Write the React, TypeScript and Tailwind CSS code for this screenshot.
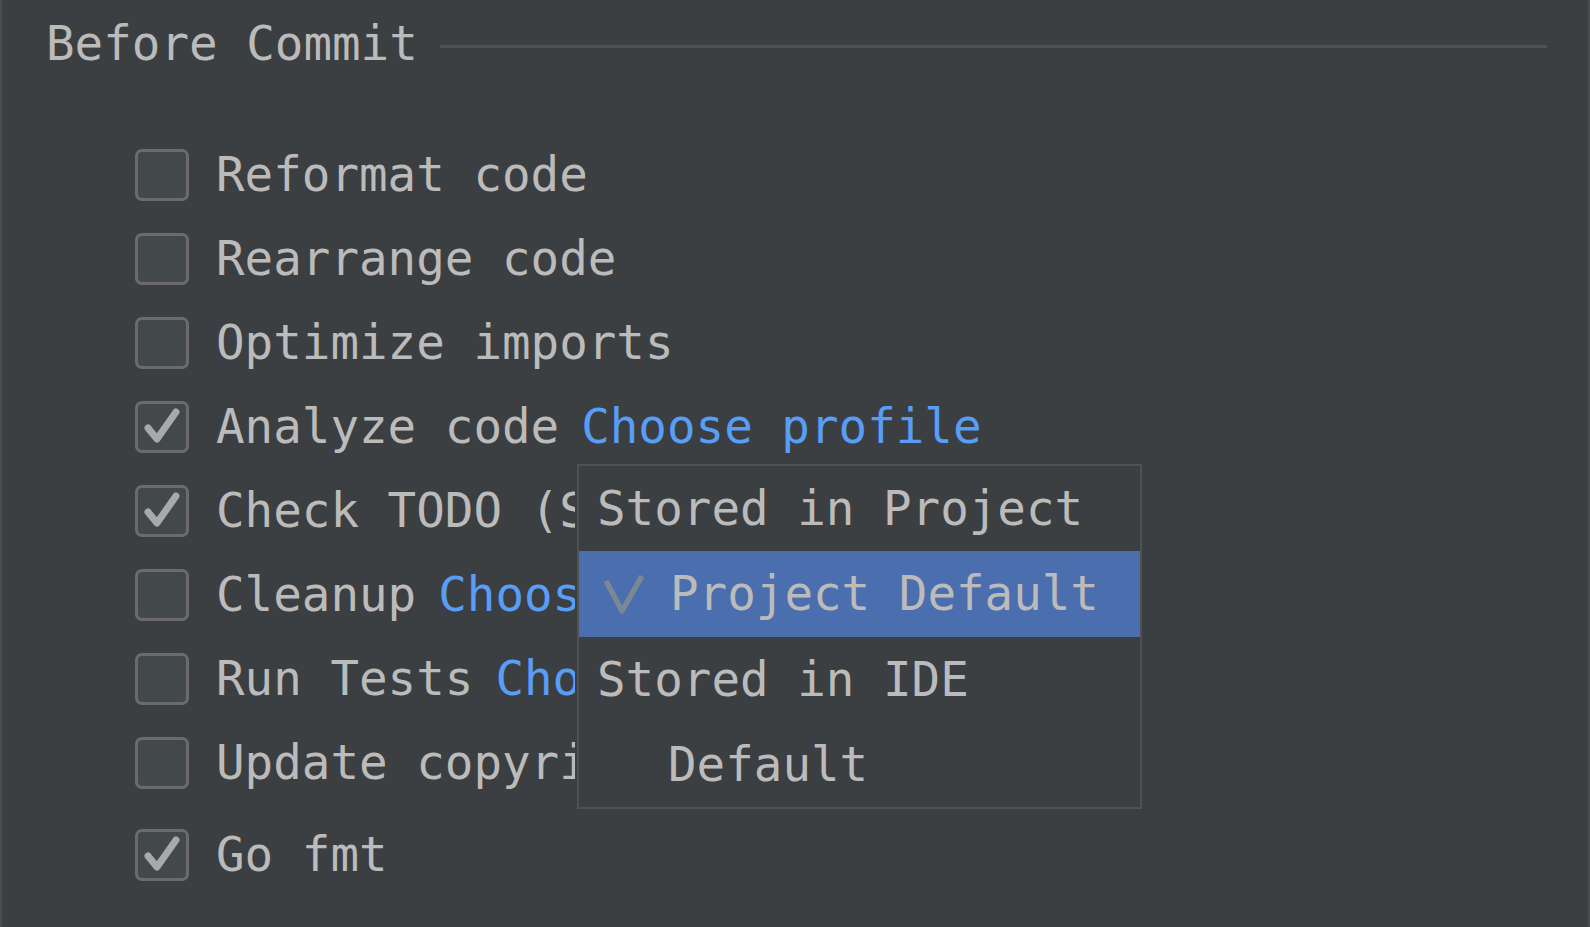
import React from 'react';

interface OptionRow {
  label: string;
  link?: string;
  checked: boolean;
  // hidden behind the popup from x=577
  clipped?: boolean;
}

const rows: OptionRow[] = [
  { label: 'Reformat code', checked: false },
  { label: 'Rearrange code', checked: false },
  { label: 'Optimize imports', checked: false },
  { label: 'Analyze code', link: 'Choose profile', checked: true },
  { label: 'Check TODO (Show All)', link: 'Configure', checked: true, clipped: true },
  { label: 'Cleanup', link: 'Choose profile', checked: false, clipped: true },
  { label: 'Run Tests', link: 'Choose configuration', checked: false, clipped: true },
  { label: 'Update copyright', checked: false, clipped: true },
];

const mono = "font-['DejaVu_Sans_Mono',monospace]";

// checkbox in darcula style
const CheckBox: React.FC<{ checked: boolean }> = ({ checked }) => (
  <div className="w-[54px] h-[52px] shrink-0 rounded-[7px] border-[3px] border-[#6b6b6b] bg-[#43494a]">
    {checked && (
      <svg width="48" height="46" viewBox="0 0 48 46">
        <path
          d="M10 24 L19 35 L38 8"
          fill="none"
          stroke="#a9a9a9"
          strokeWidth="7"
          strokeLinecap="round"
          strokeLinejoin="round"
        />
      </svg>
    )}
  </div>
);

const Row: React.FC<{ row: OptionRow; className?: string }> = ({ row, className }) => (
  <div className={`flex items-center h-[84px] ${className || ''}`}>
    <CheckBox checked={row.checked} />
    <div className={`ml-[27px] flex whitespace-pre ${row.clipped ? 'w-[359px] overflow-hidden' : ''}`}>
      <span className="text-[#bbbbbb]">{row.label}</span>
      {row.link && <span className="ml-[22px] text-[#589df6]">{row.link}</span>}
    </div>
  </div>
);

const App: React.FC = () => {
  return (
    <div
      className={`relative w-[1590px] h-[927px] overflow-hidden bg-[#3c3f41] border-l-2 border-r-2 border-[#4a4d4f] text-[47.5px] leading-[56px] ${mono}`}
    >
      {/* title with separator */}
      <div className="flex items-center pl-[44px] pt-[16px] pr-[41px]">
        <span className="text-[#bbbbbb] whitespace-pre">Before Commit</span>
        <div className="flex-1 h-[3px] bg-[#515151] ml-[22px] mt-[4px]" />
      </div>

      <div className="pl-[133px] pt-[61px] flex flex-col">
        {rows.map((r) => (
          <Row key={r.label} row={r} />
        ))}
        <Row row={{ label: 'Go fmt', checked: true }} className="mt-[8px]" />
      </div>

      {/* profile popup */}
      <div className="absolute left-[575px] top-[464px] w-[565px] border-2 border-[#515151] bg-[#3c3f41] flex flex-col">
        <div className="h-[85px] flex items-center pl-[18px] text-[#bbbbbb] whitespace-pre">Stored in Project</div>
        <div className="h-[86px] flex items-center bg-[#4b6eaf] pl-[25px] text-[#bbbbbb] whitespace-pre">
          <svg width="40" height="42" viewBox="0 0 40 42" className="shrink-0">
            <path d="M2 8 L18 38 L38 3" fill="none" stroke="#7b8894" strokeWidth="5.5" strokeLinejoin="round" />
          </svg>
          <span className="ml-[26px]">Project Default</span>
        </div>
        <div className="h-[85px] flex items-center pl-[18px] text-[#bbbbbb] whitespace-pre">Stored in IDE</div>
        <div className="h-[85px] flex items-center pl-[89px] text-[#bbbbbb] whitespace-pre">Default</div>
      </div>
    </div>
  );
};

export default App;
